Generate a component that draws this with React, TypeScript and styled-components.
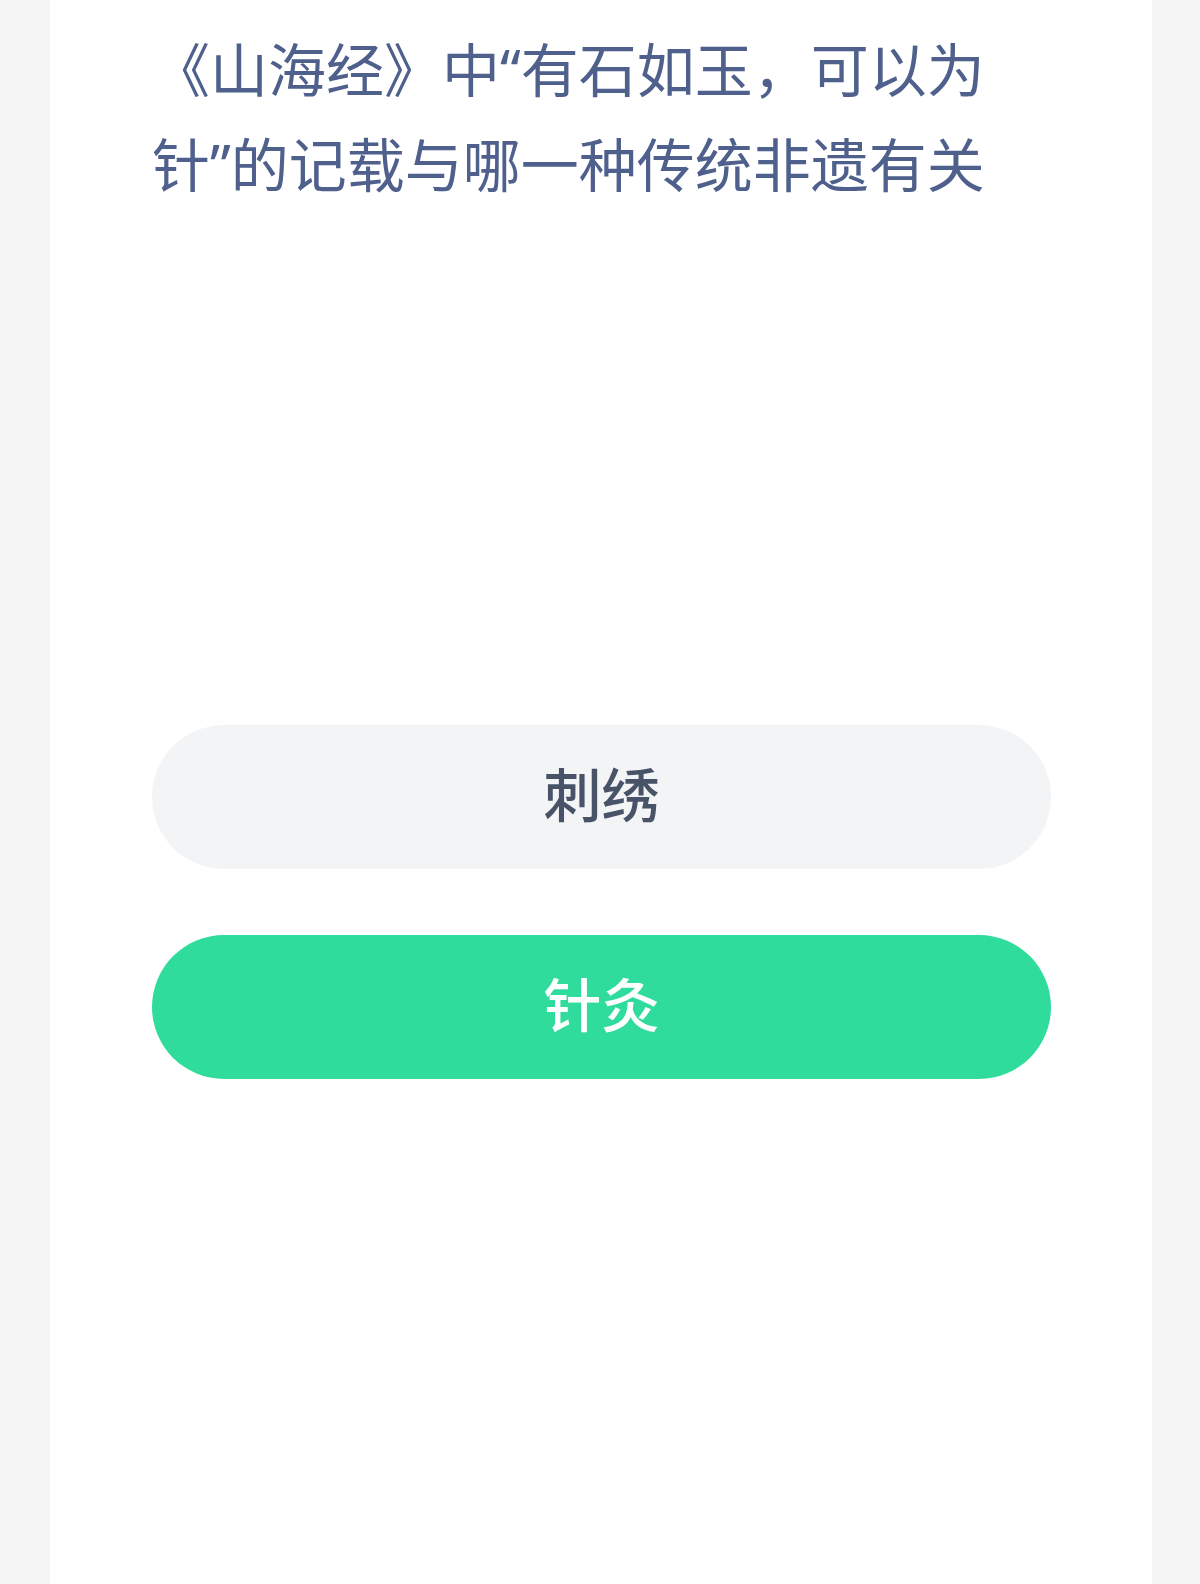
import React from "react";
import styled, { createGlobalStyle } from "styled-components";

const GlobalStyle = createGlobalStyle`
  html, body {
    margin: 0;
    padding: 0;
    background: #f5f5f6;
  }
  body {
    font-family: "Noto Sans CJK SC", "Noto Sans", sans-serif;
  }
`;

const Page = styled.div`
  display: flex;
  min-height: 1584px;
  padding: 0 48px 0 50px;
  box-sizing: border-box;
  background: #f5f5f6;
`;

const Card = styled.main`
  flex: 1;
  background: #ffffff;
  display: flex;
  flex-direction: column;
  padding: 22px 101px 0 102px;
  box-sizing: border-box;
`;

const Question = styled.h1`
  margin: 0;
  max-width: 880px;
  font-family: "Noto Sans", "Noto Sans CJK SC", sans-serif;
  font-size: 58px;
  line-height: 95px;
  font-weight: 400;
  color: #4e608b;
  letter-spacing: 0;
`;

const Options = styled.div`
  display: flex;
  flex-direction: column;
  gap: 66px;
  margin-top: 513px;
`;

const Option = styled.button<{ $selected?: boolean }>`
  height: 144px;
  border: none;
  border-radius: 72px;
  font-family: "Noto Sans CJK SC", "Noto Sans", sans-serif;
  font-size: 58px;
  font-weight: 500;
  display: flex;
  align-items: center;
  justify-content: center;
  padding: 0 0 10px;
  box-sizing: border-box;
  background: ${(p) => (p.$selected ? "#2fdc9b" : "#f3f4f6")};
  color: ${(p) => (p.$selected ? "#ffffff" : "#485368")};
  cursor: pointer;
`;

export default function App() {
  return (
    <>
      <GlobalStyle />
      <Page>
        <Card>
          <Question>《山海经》中“有石如玉，可以为针”的记载与哪一种传统非遗有关</Question>
          <Options>
            <Option>刺绣</Option>
            <Option $selected>针灸</Option>
          </Options>
        </Card>
      </Page>
    </>
  );
}
